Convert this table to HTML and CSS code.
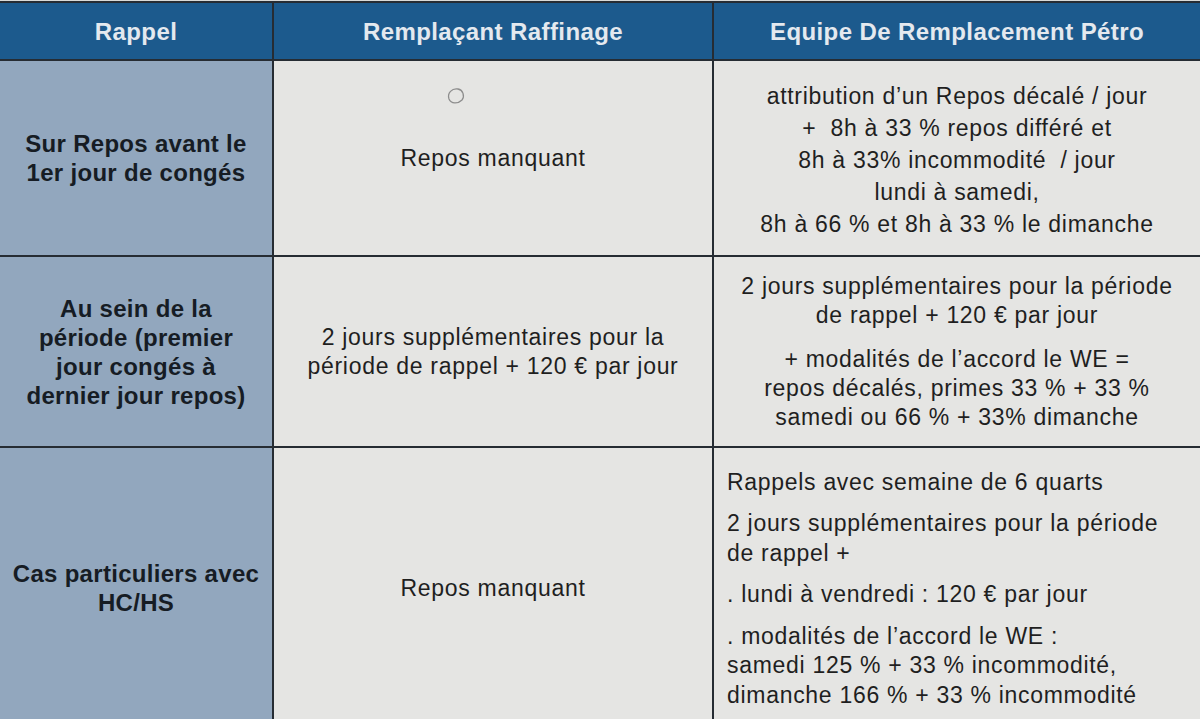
FILE: index.html
```html
<!DOCTYPE html>
<html lang="fr">
<head>
<meta charset="utf-8">
<title>Rappel</title>
<link rel="stylesheet" href="styles.css">
</head>
<body>
<div class="sheet">
  <div class="grid">
    <div class="cell head">Rappel</div>
    <div class="cell head">Remplaçant Raffinage</div>
    <div class="cell head">Equipe De Remplacement Pétro</div>

    <div class="cell label">Sur Repos avant le<br>1er jour de congés</div>
    <div class="cell body center">
      <svg class="mark" width="24" height="22" viewBox="0 0 24 22"><path d="M14 3 C8 2 3 7 5 13 C7 18 14 18 18 14 C21 10 19 4 14 3" fill="none" stroke="#8d8d8d" stroke-width="1.3"/></svg>
      <p>Repos manquant</p>
    </div>
    <div class="cell body center tall">
      <p>attribution d’un Repos décalé / jour<br>+&nbsp; 8h à 33 % repos différé et<br>8h à 33% incommodité&nbsp; / jour<br>lundi à samedi,<br>8h à 66 % et 8h à 33 % le dimanche</p>
    </div>

    <div class="cell label">Au sein de la<br>période (premier<br>jour congés à<br>dernier jour repos)</div>
    <div class="cell body center">
      <p>2 jours supplémentaires pour la<br>période de rappel + 120 € par jour</p>
    </div>
    <div class="cell body center">
      <p>2 jours supplémentaires pour la période<br>de rappel + 120 € par jour</p>
      <p>+ modalités de l’accord le WE =<br>repos décalés, primes 33 % + 33 %<br>samedi ou 66 % + 33% dimanche</p>
    </div>

    <div class="cell label">Cas particuliers avec<br>HC/HS</div>
    <div class="cell body center">
      <p>Repos manquant</p>
    </div>
    <div class="cell body left">
      <p>Rappels avec semaine de 6 quarts</p>
      <p>2 jours supplémentaires pour la période<br>de rappel +</p>
      <p>. lundi à vendredi : 120 € par jour</p>
      <p>. modalités de l’accord le WE :<br>samedi 125 % + 33 % incommodité,<br>dimanche 166 % + 33 % incommodité</p>
    </div>
  </div>
</div>
</body>
</html>
```

FILE: styles.css
```css
* { box-sizing: border-box; }

html, body {
  margin: 0;
  padding: 0;
  height: 100%;
  overflow: hidden;
  background: #d9dad8;
}

.sheet {
  padding-top: 1px;
}

.grid {
  display: grid;
  grid-template-columns: 272px 438px 486px;
  grid-template-rows: 56px 194px 189px 280px;
  gap: 2px;
  padding-top: 2px;
  background: #262c33;
  font-family: "Liberation Sans", Arial, sans-serif;
}

.cell {
  display: flex;
  flex-direction: column;
  justify-content: center;
  position: relative;
}

.head {
  background: #1c5a8d;
  color: #e4e9ef;
  font-weight: bold;
  font-size: 24px;
  letter-spacing: 0.4px;
  align-items: center;
  text-align: center;
  padding-top: 2px;
}

.label {
  background: #92a7be;
  color: #161c24;
  font-weight: bold;
  font-size: 24px;
  letter-spacing: 0.3px;
  line-height: 29px;
  text-align: center;
  align-items: center;
  padding: 0 1px;
}

.body {
  background: #e5e5e3;
  color: #1f1f1f;
  font-size: 23px;
  letter-spacing: 0.7px;
  line-height: 29px;
}

.body p {
  margin: 0;
}

.body p + p {
  margin-top: 15px;
}

.center {
  text-align: center;
  align-items: center;
}

.left {
  text-align: left;
  padding-left: 13px;
  line-height: 29.5px;
  padding-top: 2px;
}

.left p + p {
  margin-top: 12px;
}

.tall {
  line-height: 32px;
  padding-top: 4px;
}

.mark {
  position: absolute;
  left: 170px;
  top: 25px;
}
```
